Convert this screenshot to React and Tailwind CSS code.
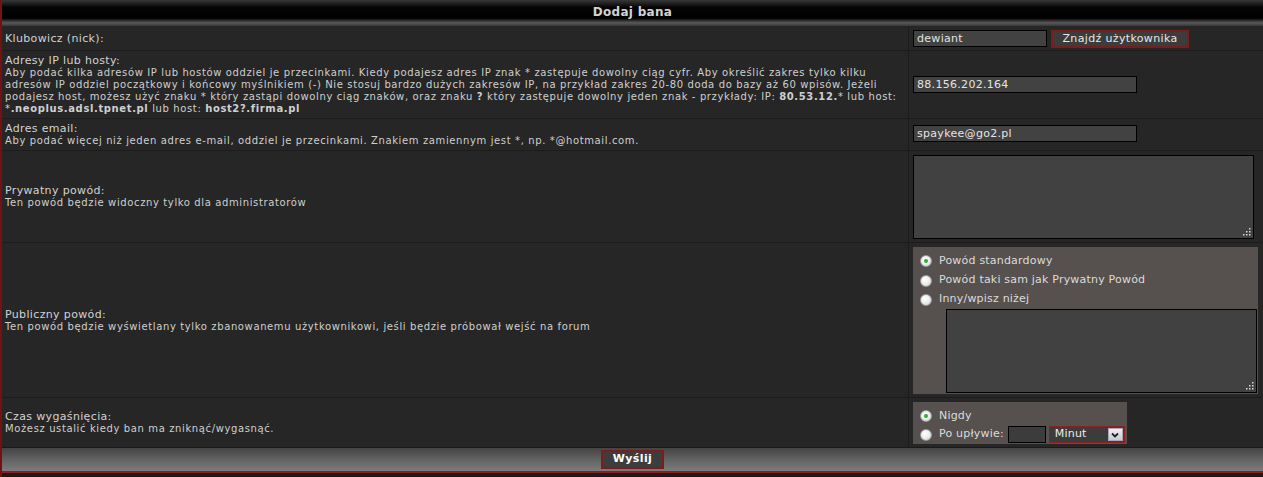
import React from 'react';

const FONT = { fontFamily: '"DejaVu Sans", Verdana, sans-serif' };

function Grip() {
  return (
    <svg width="9" height="9" viewBox="0 0 9 9" className="absolute bottom-[2px] right-[2px]">
      {[[7, 1], [4, 4], [7, 4], [1, 7], [4, 7], [7, 7]].map(([x, y]) => (
        <rect key={`${x}-${y}`} x={x} y={y} width="1.5" height="1.5" fill="#d8d8d8" />
      ))}
    </svg>
  );
}

function Radio({ checked }) {
  return (
    <span className="relative inline-block w-[12px] h-[12px] rounded-full border border-[#9a9a9a] bg-[radial-gradient(circle_at_40%_35%,#ffffff_0%,#f0f0f0_45%,#c8c8c8_100%)] shrink-0">
      {checked && <span className="absolute left-[3px] top-[3px] w-[4px] h-[4px] rounded-full bg-[#2fae2f]" />}
    </span>
  );
}

function Label({ title, children }) {
  return (
    <div className="text-[#d2d2d2] whitespace-nowrap">
      <div className="text-[11px] leading-[13px] tracking-[0.35px]">{title}</div>
      {children && <div className="text-[10px] leading-[12px] tracking-[0.62px] text-[#cfcfcf]">{children}</div>}
    </div>
  );
}

function Row({ h, label, children }) {
  return (
    <div className={`flex gap-px ${h}`}>
      <div className="flex-1 min-w-0 bg-[#262626] flex items-center pl-[3px] overflow-hidden">{label}</div>
      <div className="w-[354px] bg-[#262626] p-[4px]">{children}</div>
    </div>
  );
}

export default function App() {
  return (
    <div className="w-[1263px] h-[477px] bg-[#1a1a1a] border-l-2 border-[#6e1414] flex flex-col overflow-hidden" style={FONT}>
      <div className="h-[26px] shrink-0 flex items-center justify-center bg-[linear-gradient(#383838_0%,#050505_28%,#000_70%,#5a5a5a_88%,#363636_100%)]">
        <span className="text-[12px] font-bold text-[#d4d4d4] -mt-[2px] tracking-[0.3px]">Dodaj bana</span>
      </div>

      <div className="flex flex-col gap-px bg-[#1c1c1c]">
        <Row h="h-[24px]" label={<Label title="Klubowicz (nick):" />}>
          <div className="flex gap-[4px]">
            <div className="w-[134px] h-[17px] bg-[#424242] border border-black text-[11px] leading-[15px] text-[#e4e4e4] px-[3px] tracking-[0.3px]">dewiant</div>
            <div className="w-[138px] h-[18px] bg-[#3c3c3c] border-2 border-[#7c1d1d] text-[11px] leading-[14px] text-[#e8e8e8] text-center tracking-[0.35px]">Znajdź użytkownika</div>
          </div>
        </Row>

        <Row
          h="h-[67px]"
          label={
            <Label title="Adresy IP lub hosty:">
              Aby podać kilka adresów IP lub hostów oddziel je przecinkami. Kiedy podajesz adres IP znak * zastępuje dowolny ciąg cyfr. Aby określić zakres tylko kilku<br />
              adresów IP oddziel początkowy i końcowy myślnikiem (-) Nie stosuj bardzo dużych zakresów IP, na przykład zakres 20-80 doda do bazy aż 60 wpisów. Jeżeli<br />
              podajesz host, możesz użyć znaku * który zastąpi dowolny ciąg znaków, oraz znaku <b>?</b> który zastępuje dowolny jeden znak - przykłady: IP: <b>80.53.12.</b>* lub host:<br />
              *<b>.neoplus.adsl.tpnet.pl</b> lub host: <b>host2?.firma.pl</b>
            </Label>
          }
        >
          <div className="flex items-center h-full">
            <div className="w-[224px] h-[17px] bg-[#424242] border border-black text-[11px] leading-[15px] text-[#e4e4e4] px-[3px] tracking-[0.3px]">88.156.202.164</div>
          </div>
        </Row>

        <Row
          h="h-[31px]"
          label={<Label title="Adres email:">Aby podać więcej niż jeden adres e-mail, oddziel je przecinkami. Znakiem zamiennym jest *, np. *@hotmail.com.</Label>}
        >
          <div className="mt-[2px] w-[224px] h-[17px] bg-[#424242] border border-black text-[11px] leading-[15px] text-[#e4e4e4] px-[3px] tracking-[0.3px]">spaykee@go2.pl</div>
        </Row>

        <Row
          h="h-[91px]"
          label={<Label title="Prywatny powód:">Ten powód będzie widoczny tylko dla administratorów</Label>}
        >
          <div className="relative w-[341px] h-[84px] bg-[#414141] border border-black">
            <Grip />
          </div>
        </Row>

        <Row
          h="h-[154px]"
          label={<Label title="Publiczny powód:">Ten powód będzie wyświetlany tylko zbanowanemu użytkownikowi, jeśli będzie próbował wejść na forum</Label>}
        >
          <div className="w-[345px] h-[147px] bg-[#56514e] pt-[4px] pl-[7px] text-[11px] text-[#dcdcdc] tracking-[0.2px]">
            <div className="flex items-center gap-[7px] h-[20px]"><Radio checked /><span>Powód standardowy</span></div>
            <div className="flex items-center gap-[7px] h-[19px]"><Radio /><span>Powód taki sam jak Prywatny Powód</span></div>
            <div className="flex items-center gap-[7px] h-[19px]"><Radio /><span>Inny/wpisz niżej</span></div>
            <div className="relative ml-[26px] w-[311px] h-[84px] bg-[#414141] border border-black">
              <Grip />
            </div>
          </div>
        </Row>

        <Row
          h="h-[49px]"
          label={<Label title="Czas wygaśnięcia:">Możesz ustalić kiedy ban ma zniknąć/wygasnąć.</Label>}
        >
          <div className="w-[214px] h-[42px] bg-[#56514e] pl-[7px] pt-[5px] text-[11px] text-[#dcdcdc] tracking-[0.2px] whitespace-nowrap">
            <div className="flex items-center gap-[7px] h-[18px]"><Radio checked /><span>Nigdy</span></div>
            <div className="flex items-center h-[19px]">
              <Radio />
              <span className="ml-[7px] shrink-0">Po upływie:</span>
              <div className="ml-[4px] shrink-0 w-[38px] h-[17px] bg-[#3c3c3c] border border-black" />
              <div className="ml-[3px] shrink-0 w-[76px] h-[17px] bg-[#3c3c3c] border border-[#8a2222] flex items-center justify-between pl-[5px] pr-px">
                <span className="text-[#ececec]">Minut</span>
                <span className="w-[15px] h-[13px] bg-[linear-gradient(#eeeef4,#c9c9d6)] border border-[#a8a8b8] flex items-center justify-center">
                  <svg width="8" height="6" viewBox="0 0 8 6"><path d="M1 1.5 L4 4.5 L7 1.5" stroke="#222" strokeWidth="1.8" fill="none" /></svg>
                </span>
              </div>
            </div>
          </div>
        </Row>
      </div>

      <div className="h-[23px] shrink-0 mt-px flex items-center justify-center bg-[linear-gradient(#444444,#626262_50%,#7c7c7c)]">
        <div className="w-[63px] h-[19px] bg-[#3d3d3d] border-2 border-[#7c1d1d] text-[11px] font-bold text-white flex items-center justify-center tracking-[0.4px]">Wyślij</div>
      </div>
      <div className="h-[2px] shrink-0 bg-[#8e1c1c]" />
      <div className="flex-1 bg-[#1b1b1b]" />
    </div>
  );
}
